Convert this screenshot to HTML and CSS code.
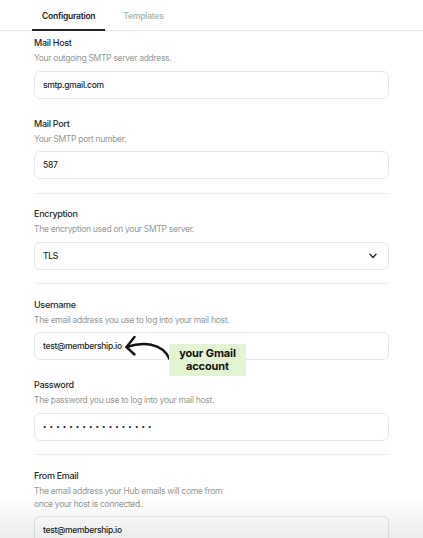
FILE: index.html
```html
<!DOCTYPE html>
<html>
<head>
<meta charset="utf-8">
<link rel="stylesheet" href="styles.css">
</head>
<body>
<div class="page">
  <nav class="tabs">
    <div class="tab active">Configuration</div>
    <div class="tab">Templates</div>
  </nav>
  <main class="form">
    <div class="field">
      <div class="label">Mail Host</div>
      <div class="help">Your outgoing SMTP server address.</div>
      <div class="input">smtp.gmail.com</div>
    </div>
    <div class="field">
      <div class="label">Mail Port</div>
      <div class="help">Your SMTP port number.</div>
      <div class="input">587</div>
    </div>
    <hr class="divider">
    <div class="field">
      <div class="label">Encryption</div>
      <div class="help">The encryption used on your SMTP server.</div>
      <div class="input select">TLS
        <svg class="chev" width="10" height="6" viewBox="0 0 10 6"><path d="M2 1.3 L5 4.4 L8 1.3" fill="none" stroke="#2a2d2b" stroke-width="1.4" stroke-linecap="round" stroke-linejoin="round"/></svg>
      </div>
    </div>
    <hr class="divider">
    <div class="field">
      <div class="label">Username</div>
      <div class="help">The email address you use to log into your mail host.</div>
      <div class="input annotated">test@membership.io
        <svg class="arrow" width="50" height="28" viewBox="0 0 50 28"><path d="M2.5 13 C18 8 38 8 45.5 25" fill="none" stroke="#111" stroke-width="2.4" stroke-linecap="round"/><path d="M10.5 3 L2.5 13 L10.5 20.5" fill="none" stroke="#111" stroke-width="2.4" stroke-linecap="round" stroke-linejoin="round"/></svg>
        <div class="note">your Gmail<br>account</div>
      </div>
    </div>
    <div class="field">
      <div class="label">Password</div>
      <div class="help">The password you use to log into your mail host.</div>
      <div class="input dots">•••••••••••••••••</div>
    </div>
    <hr class="divider">
    <div class="field">
      <div class="label">From Email</div>
      <div class="help">The email address your Hub emails will come from<br>once your host is connected.</div>
      <div class="input">test@membership.io</div>
    </div>
  </main>
</div>
<div class="fade"></div>
</body>
</html>
```
FILE: styles.css
```css
html, body {
  margin: 0;
  padding: 0;
  background: #fff;
}
body {
  font-family: Inter, "Noto Sans", sans-serif;
  color: #262a27;
  width: 423px;
  height: 538px;
  overflow: hidden;
}
.tabs {
  display: flex;
  height: 30px;
  border-bottom: 1px solid #e4ebe7;
  padding-left: 32px;
  gap: 8px;
}
.tab {
  padding: 3px 10px 0 10px;
  line-height: 26px;
  font-size: 8.5px;
  letter-spacing: -0.25px;
  font-weight: 600;
  color: #abbab2;
  box-sizing: border-box;
  height: 31px;
}
.tab.active {
  color: #1d221f;
  border-bottom: 2px solid #1d2621;
}
.form {
  padding: 5px 34px 0 34px;
  width: 355px;
  display: flex;
  flex-direction: column;
  gap: 18px;
}
.field {
  display: flex;
  flex-direction: column;
}
.label {
  font-size: 9px;
  font-weight: 500;
  letter-spacing: -0.3px;
  line-height: 14px;
  margin-bottom: 2px;
  color: #262a27;
}
.help {
  font-size: 8.5px;
  letter-spacing: -0.3px;
  line-height: 13px;
  color: #939995;
  margin-bottom: 5.5px;
}
.input {
  position: relative;
  height: 28px;
  box-sizing: border-box;
  border: 1px solid #e5eae7;
  border-radius: 6px;
  padding-left: 8px;
  display: flex;
  align-items: center;
  font-size: 8.5px;
  letter-spacing: -0.3px;
  font-weight: 500;
  color: #222523;
}
.select {
  justify-content: space-between;
  padding-right: 10px;
}
.dots {
  font-size: 6.5px;
  letter-spacing: 3.1px;
}
.divider {
  border: 0;
  border-top: 1px solid #ebeeec;
  margin: -4.5px 0;
  height: 0;
}
.arrow {
  position: absolute;
  left: 89px;
  top: 1px;
}
.note {
  position: absolute;
  left: 134px;
  top: 11px;
  width: 77px;
  height: 32px;
  background: #e3f4d2;
  font-size: 11px;
  font-weight: 700;
  line-height: 13px;
  letter-spacing: -0.1px;
  text-align: center;
  color: #111;
  display: flex;
  align-items: center;
  justify-content: center;
}
.fade {
  position: fixed;
  left: 0;
  right: 0;
  bottom: 0;
  height: 42px;
  background: linear-gradient(to bottom, rgba(0,0,0,0), rgba(0,0,0,0.07));
  pointer-events: none;
}
```
